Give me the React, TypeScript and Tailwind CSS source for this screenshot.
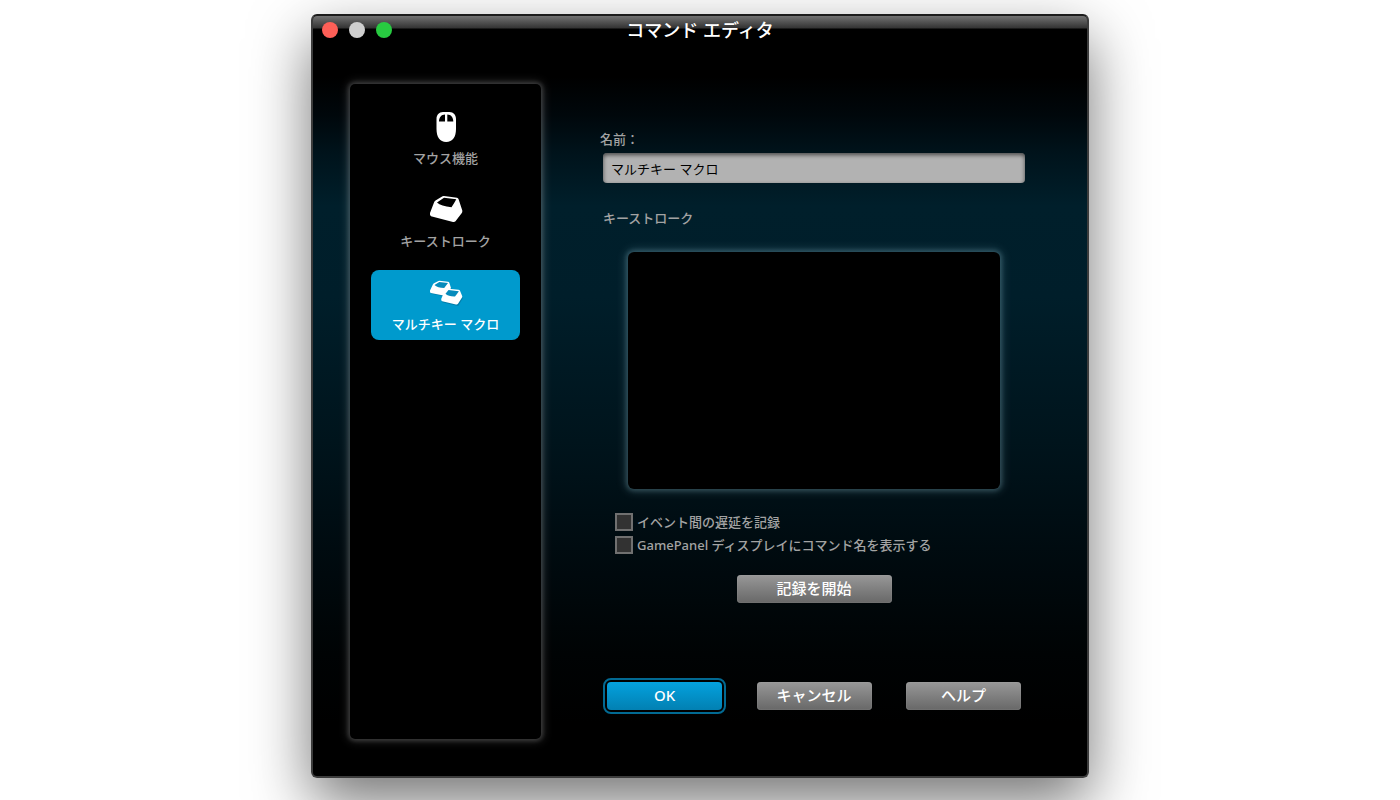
import { useState } from "react";
import type { ReactNode } from "react";
import { cva } from "class-variance-authority";
import { clsx } from "clsx";

const MouseIcon = () => (
    <svg viewBox="0 0 32 32" className="size-8 overflow-visible" fill="#fff" aria-hidden="true">
        <path
            fillRule="evenodd"
            d="M13 1h6.500c4 0 6.500 3 6.500 7v10c0 8-3.500 13-9.800 13S6.500 26 6.500 18V8c0-4 2.500-7 6.500-7ZM9 10.600h6V3.500C11.500 3.500 9 6.300 9 10.600ZM17.300 3.500v7.100h6C23.300 6.300 21 3.500 17.300 3.500Z"
        />
    </svg>
);

const KeyIcon = () => (
    <svg viewBox="0 0 32 32" className="size-8 overflow-visible" fill="#fff" aria-hidden="true">
        <path
            fillRule="evenodd"
            d="M14 2 27 3.700Q28 4 28.500 5L32.300 16.500Q32.500 18 31.800 19L25.500 27.300Q24.500 28.400 23 28L1 22.200Q-.4 21.500 0 19L4.200 8Q4.600 7 5.500 6.500L12.500 2.300Q13.200 1.900 14 2ZM14 3.700 7 8.500Q11 12.200 21.500 13.300Q24 9.500 26.300 5.200Z"
        />
    </svg>
);

const MultiKeyIcon = () => (
    <svg viewBox="0 0 32 32" className="size-8 overflow-visible" aria-hidden="true">
        <g fill="#036d96" opacity=".65" transform="translate(.6 1.300)">
            <path d="M9 3.700 18 4.700 21 11 16 18.500.5 15.500 0 13.500 3.500 6.500Z" />
            <path d="M18 11.700 29 13 32.200 20 27.500 27.700 11.500 24 11.200 21 14 15Z" />
        </g>
        <g fill="#fff">
            <path d="M9.500 3.700 18 4.700Q19 4.900 19.300 5.700L21 11 16 19 .8 16Q-.3 15.500 0 13.500L3 7.200Q3.300 6.500 4 6.200L8.500 3.900Z" />
            <path d="M18.500 11.700 28.500 12.800Q29.500 13 30 13.800L32.200 19Q32.400 20 32 20.600L28 26.800Q27.400 27.800 26 27.500L12.200 24.300Q11 23.800 11.200 22L13.800 15.800 17.500 12Z" />
        </g>
        <g fill="#068bbb">
            <path d="M9.300 4.900 4.500 8Q7.500 10.900 14.200 11Q16 8.500 18 5.900Z" />
            <path d="M18.500 12.900 15.500 16.800Q18.500 19.600 25 19.400Q27 17 28.900 14.200Z" />
        </g>
    </svg>
);

interface Category {
    id: string;
    label: string;
    icon: ReactNode;
}

const categories: Category[] = [
    { id: "mouse", label: "マウス機能", icon: <MouseIcon /> },
    { id: "keystroke", label: "キーストローク", icon: <KeyIcon /> },
    { id: "macro", label: "マルチキー マクロ", icon: <MultiKeyIcon /> },
];

const button = cva("h-7 rounded-[4px] pb-[3px] text-[15px] leading-6 font-medium text-white", {
    variants: {
        tone: {
            gray: "bg-linear-to-b from-[#989898] to-[#686868] shadow-[inset_0_0_1px_#bbb]",
            blue: "bg-linear-to-b from-[#04a2df] to-[#0280b2] outline-2 outline-offset-2 outline-[#026a93]",
        },
        size: {
            md: "w-[115px]",
            lg: "w-[155px]",
        },
    },
    defaultVariants: { tone: "gray", size: "md" },
});

const Checkbox = ({ id, children }: { id: string; children: ReactNode }) => (
    <div className="flex items-center gap-1">
        <input
            id={id}
            type="checkbox"
            className="size-[18px] appearance-none border-2 border-[#707070] bg-[#323232] checked:bg-[#009acd]"
        />
        <label htmlFor={id}>{children}</label>
    </div>
);

export default function App() {
    const [selected, setSelected] = useState("macro");
    const [name, setName] = useState("マルチキー マクロ");

    return (
        <div className="min-h-screen overflow-hidden bg-white px-4 pt-[14px] pb-[22px] font-['Noto_Sans','Noto_Sans_CJK_JP',sans-serif] text-[13px] leading-5 font-medium text-[#a3a3a3]">
            <div
                className={clsx(
                    "mx-auto flex w-full max-w-[778px] flex-col rounded-[6px] border-2 border-[#3c3c3c] border-t-[#1c1c1c]",
                    "bg-[linear-gradient(#000_0%,#000_8%,#00070b_13%,#00131b_18%,#001f2b_25%,#001e2a_37%,#00141c_56%,#000b10_70%,#000304_84%,#000_93%)]",
                    "shadow-[0_24px_60px_rgba(0,0,0,0.55)]"
                )}
            >
                <header className="flex h-7 items-center rounded-t-[4px] bg-[linear-gradient(#727272_0px,#333_12px,#000_13px,#000_100%)] px-[9px]">
                    <div className="flex flex-1 gap-[11px]">
                        <button type="button" aria-label="閉じる" className="size-4 rounded-full bg-[#fe5f57]" />
                        <button type="button" aria-label="しまう" className="size-4 rounded-full bg-[#cfcfcf]" />
                        <button type="button" aria-label="拡大" className="size-4 rounded-full bg-[#28cb41]" />
                    </div>
                    <h1 className="text-[18px] leading-6 font-medium text-white">コマンド エディタ</h1>
                    <div className="flex-1" />
                </header>

                <div className="flex pt-10 pr-[59px] pb-[37px] pl-[37px]">
                    <nav className="flex min-h-[655px] w-[191px] shrink-0 flex-col gap-[13px] rounded-[5px] bg-black px-[21px] pt-5 shadow-[0_0_4px_2px_rgba(255,255,255,0.16),0_0_10px_3px_rgba(255,255,255,0.12)]">
                        {categories.map((item) => (
                            <button
                                key={item.id}
                                type="button"
                                onClick={() => setSelected(item.id)}
                                aria-pressed={selected === item.id}
                                className={clsx(
                                    "flex h-[70px] flex-col items-center gap-[5px] rounded-[8px] pt-[7px]",
                                    selected === item.id && "bg-[#009acd] text-white"
                                )}
                            >
                                {item.icon}
                                {item.label}
                            </button>
                        ))}
                    </nav>

                    <main className="flex min-w-0 flex-1 flex-col pt-[45px] pl-[59px]">
                        <label htmlFor="command-name">名前：</label>
                        <input
                            id="command-name"
                            value={name}
                            onChange={(e) => setName(e.target.value)}
                            className="mx-[3px] mt-1 h-[30px] rounded-[4px] bg-[#b2b2b2] px-2 font-normal text-black shadow-[inset_0_2px_4px_rgba(0,0,0,0.6)]"
                        />

                        <h2 className="mt-[25px] pl-[3px]">キーストローク</h2>
                        <div className="mx-7 mt-6 h-[237px] rounded-[6px] bg-black shadow-[0_0_4px_2px_rgba(140,190,205,0.24),0_0_10px_3px_rgba(140,190,205,0.2)]" />

                        <div className="mt-[23px] ml-[15px] flex flex-col gap-[3px]">
                            <Checkbox id="record-delay">イベント間の遅延を記録</Checkbox>
                            <Checkbox id="show-name">GamePanel ディスプレイにコマンド名を表示する</Checkbox>
                        </div>

                        <button type="button" className={clsx(button({ size: "lg" }), "mt-5 self-center")}>
                            記録を開始
                        </button>

                        <div className="mx-[7px] mt-[79px] flex justify-between">
                            <button type="button" className={button({ tone: "blue" })}>
                                OK
                            </button>
                            <button type="button" className={button()}>
                                キャンセル
                            </button>
                            <button type="button" className={button()}>
                                ヘルプ
                            </button>
                        </div>
                    </main>
                </div>
            </div>
        </div>
    );
}
